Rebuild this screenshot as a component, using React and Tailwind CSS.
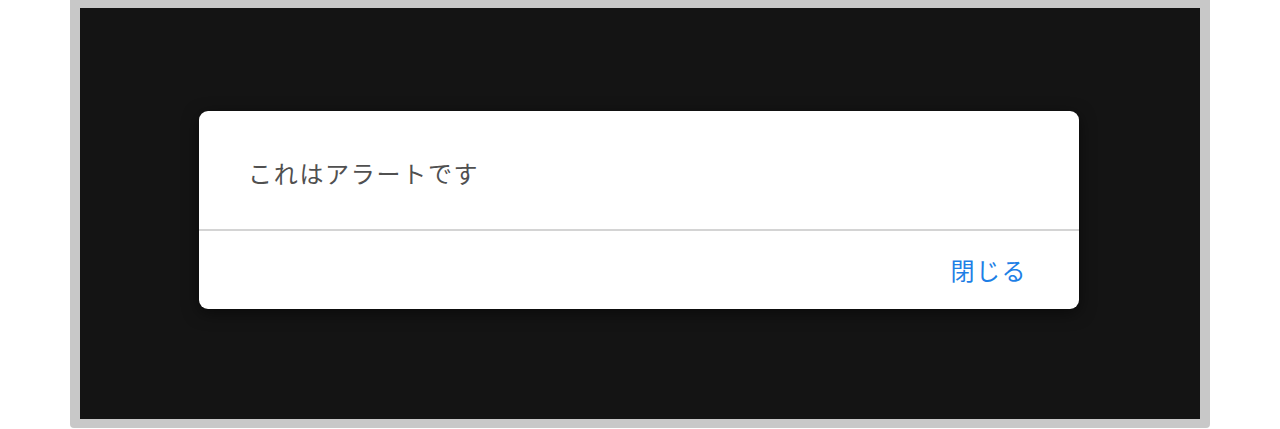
export default function App() {
  const font = { fontFamily: '"Noto Sans CJK JP", "Noto Sans", sans-serif' };
  return (
    <div className="w-[1280px] h-[429px] bg-white flex justify-center" style={font}>
      <div className="w-[1140px] h-[428px] bg-[#c8c8c8] rounded-b-[4px] pt-[8px] px-[10px] pb-[9px]">
        <div className="w-full h-full bg-[#141414] pt-[103px] pl-[119px]">
          <div className="w-[880px] h-[198px] bg-white rounded-[9px] shadow-[0_4px_16px_rgba(0,0,0,0.5)] flex flex-col">
            <div className="h-[118px] flex items-center pl-[49px] pt-[5px]">
              <span className="text-[24px] leading-none tracking-[1.7px] text-[#505050]">これはアラートです</span>
            </div>
            <div className="h-[2px] bg-[#d4d4d4]" />
            <div className="flex-1 flex items-center justify-end pr-[52px] pb-[1px]">
              <span className="text-[24px] leading-none tracking-[1.5px] text-[#1e7fe6]">閉じる</span>
            </div>
          </div>
        </div>
      </div>
    </div>
  );
}
